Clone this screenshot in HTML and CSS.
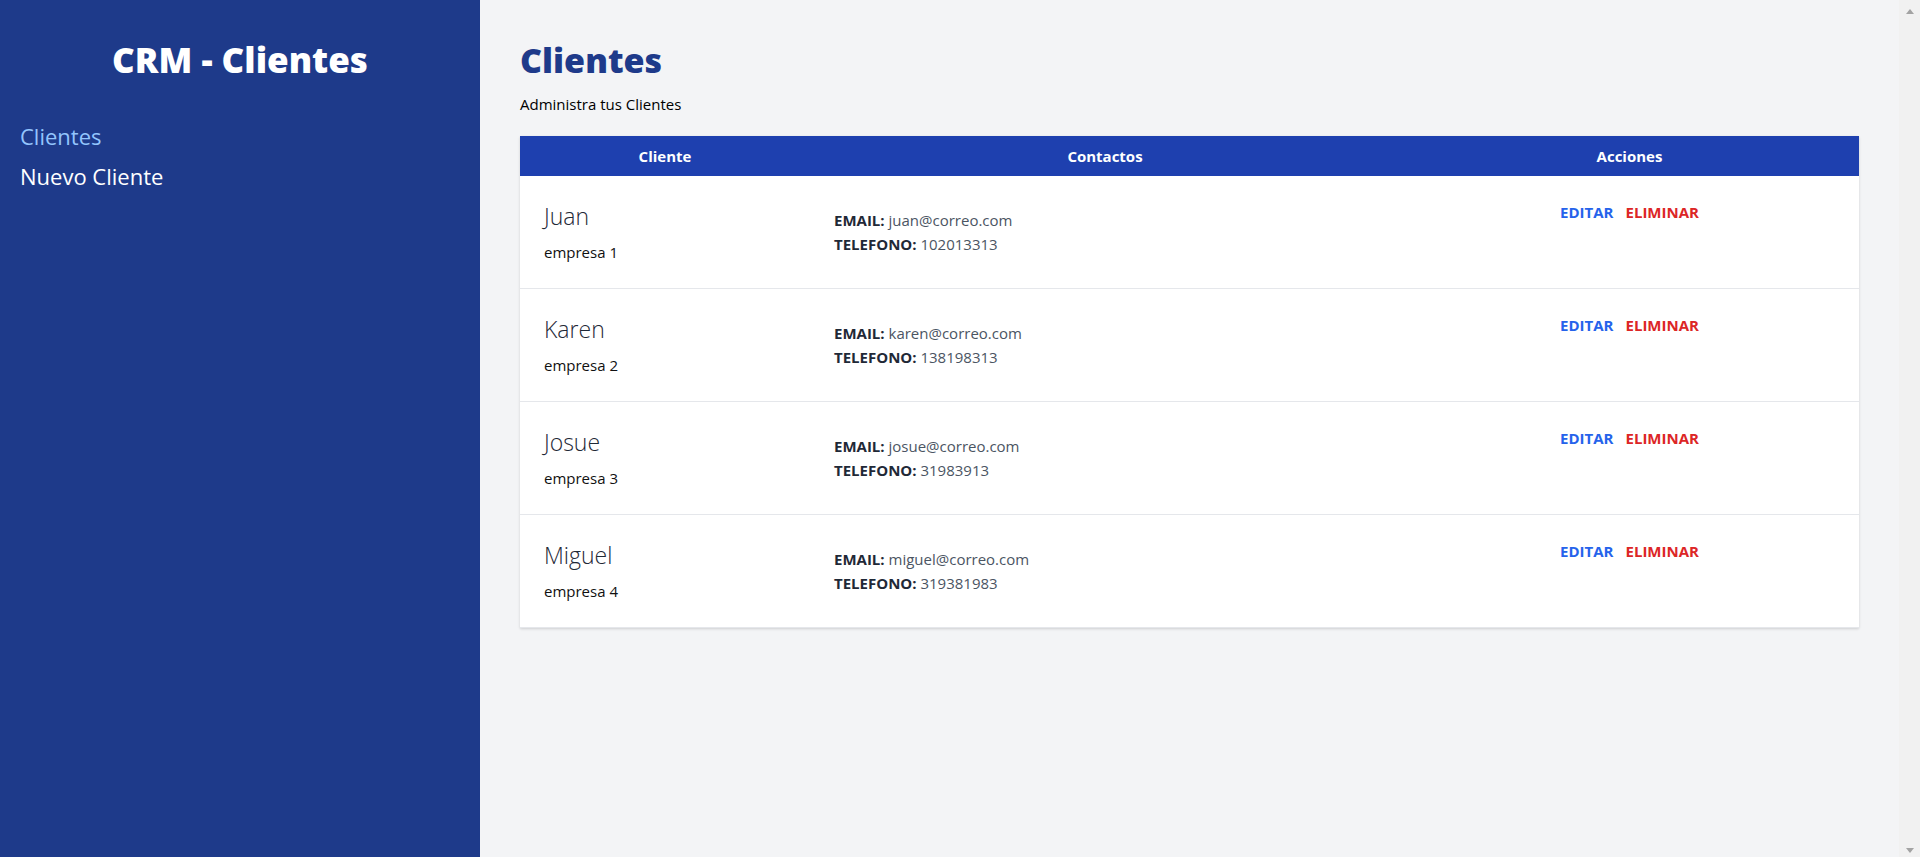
FILE: index.html
```html
<!DOCTYPE html>
<html lang="es">
<head>
<meta charset="utf-8">
<title>CRM - Clientes</title>
<link rel="stylesheet" href="styles.css">
</head>
<body>
<div class="app">
  <aside class="sidebar">
    <h2 class="brand">CRM - Clientes</h2>
    <nav class="nav">
      <a class="nav-link active" href="#">Clientes</a>
      <a class="nav-link" href="#">Nuevo Cliente</a>
    </nav>
  </aside>
  <main class="main">
    <h1 class="page-title">Clientes</h1>
    <p class="page-sub">Administra tus Clientes</p>
    <table class="clients">
      <thead>
        <tr>
          <th class="col-client">Cliente</th>
          <th class="col-contact">Contactos</th>
          <th class="col-actions">Acciones</th>
        </tr>
      </thead>
      <tbody>
        <tr>
          <td><p class="name">Juan</p><p class="company">empresa 1</p></td>
          <td><p class="contact"><span class="label">Email:</span> juan@correo.com</p><p class="contact"><span class="label">Telefono:</span> 102013313</p></td>
          <td class="actions"><div class="action-row"><a class="btn edit" href="#">Editar</a><a class="btn delete" href="#">Eliminar</a></div></td>
        </tr>
        <tr>
          <td><p class="name">Karen</p><p class="company">empresa 2</p></td>
          <td><p class="contact"><span class="label">Email:</span> karen@correo.com</p><p class="contact"><span class="label">Telefono:</span> 138198313</p></td>
          <td class="actions"><div class="action-row"><a class="btn edit" href="#">Editar</a><a class="btn delete" href="#">Eliminar</a></div></td>
        </tr>
        <tr>
          <td><p class="name">Josue</p><p class="company">empresa 3</p></td>
          <td><p class="contact"><span class="label">Email:</span> josue@correo.com</p><p class="contact"><span class="label">Telefono:</span> 31983913</p></td>
          <td class="actions"><div class="action-row"><a class="btn edit" href="#">Editar</a><a class="btn delete" href="#">Eliminar</a></div></td>
        </tr>
        <tr>
          <td><p class="name">Miguel</p><p class="company">empresa 4</p></td>
          <td><p class="contact"><span class="label">Email:</span> miguel@correo.com</p><p class="contact"><span class="label">Telefono:</span> 319381983</p></td>
          <td class="actions"><div class="action-row"><a class="btn edit" href="#">Editar</a><a class="btn delete" href="#">Eliminar</a></div></td>
        </tr>
      </tbody>
    </table>
  </main>
  <div class="scrollbar" aria-hidden="true">
    <span class="arrow up"></span>
    <span class="arrow down"></span>
  </div>
</div>
</body>
</html>
```
FILE: styles.css
```css
* { box-sizing: border-box; }
html, body { margin: 0; padding: 0; }
body {
  font-family: "Open Sans", "Noto Sans", sans-serif;
  color: #000;
  overflow: hidden;
}
p { margin: 0; }
a { text-decoration: none; }

.app {
  display: flex;
  height: 100vh;
  background: #f3f4f6;
}

.sidebar {
  width: 480px;
  flex: none;
  background: #1e3a8a;
  padding: 40px 20px 20px;
}
.brand {
  margin: 0;
  color: #fff;
  text-align: center;
  font-size: 35px;
  line-height: 40px;
  font-weight: 800;
}
.nav {
  margin-top: 40px;
  display: flex;
  flex-direction: column;
  gap: 8px;
}
.nav-link {
  display: block;
  color: #fff;
  font-size: 22px;
  line-height: 32px;
}
.nav-link.active { color: #93c5fd; }

.main {
  flex: 1;
  padding: 40px;
  overflow: hidden;
}
.page-title {
  margin: 0;
  color: #1e3a8a;
  font-size: 34px;
  line-height: 40px;
  font-weight: 800;
}
.page-sub {
  margin-top: 12px;
  font-size: 15px;
  line-height: 24px;
  color: #000;
}

.clients {
  margin-top: 20px;
  width: 100%;
  border-collapse: collapse;
  background: #fff;
  box-shadow: 0 1px 3px rgba(0,0,0,0.1), 0 1px 2px rgba(0,0,0,0.06);
}
.clients thead tr { background: #1e40af; }
.clients th {
  color: #fff;
  font-size: 15px;
  line-height: 24px;
  font-weight: 700;
  padding: 8px 0;
  text-align: center;
}
.col-client { width: 290px; }
.col-contact { width: 590px; }
.clients td {
  padding: 24px;
  vertical-align: middle;
  border-bottom: 1px solid #e5e7eb;
}
.clients td.actions { vertical-align: top; }

.name {
  font-size: 23px;
  line-height: 32px;
  font-weight: 300;
  color: #1f2937;
}
.company {
  margin-top: 8px;
  font-size: 15px;
  line-height: 24px;
  color: #111;
}
.contact {
  font-size: 15px;
  line-height: 24px;
  color: #4b5563;
}
.label {
  color: #1f2937;
  font-weight: 700;
  text-transform: uppercase;
}

.action-row {
  display: flex;
  justify-content: center;
  gap: 12px;
}
.btn {
  font-size: 15px;
  line-height: 24px;
  font-weight: 700;
  text-transform: uppercase;
}
.btn.edit { color: #2563eb; }
.btn.delete { color: #dc2626; }

.scrollbar {
  width: 21px;
  flex: none;
  background: #f1f1f1;
  display: flex;
  flex-direction: column;
  justify-content: space-between;
  align-items: center;
  padding: 9px 0 4px;
}
.arrow {
  width: 0;
  height: 0;
  border-left: 4.5px solid transparent;
  border-right: 4.5px solid transparent;
}
.arrow.up { border-bottom: 5px solid #a3a3a3; }
.arrow.down { border-top: 5px solid #a3a3a3; }
```
